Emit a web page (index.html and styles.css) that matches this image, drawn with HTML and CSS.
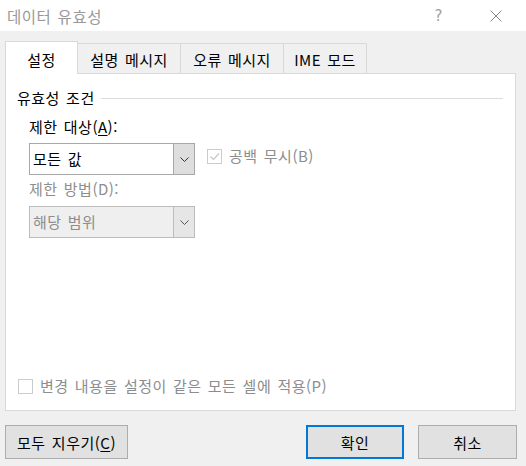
FILE: index.html
```html
<!DOCTYPE html>
<html lang="ko">
<head>
  <meta charset="UTF-8">
  <title>데이터 유효성</title>
  <link rel="stylesheet" href="styles.css">
</head>

<body>

<div class="titlebar">
  <div class="title">데이터 유효성</div>
  <div class="help">?</div>
  <svg class="close" width="12" height="12" viewBox="0 0 12 12">
    <path d="M0.5 0.5 L11.5 11.5 M11.5 0.5 L0.5 11.5" stroke="#8a8a8a" stroke-width="1" fill="none"/>
  </svg>
</div>

<div class="dialog">
  <div class="tabs">
    <div class="tab active tab-settings">설정</div>
    <div class="tab tab-input">설명 메시지</div>
    <div class="tab tab-error">오류 메시지</div>
    <div class="tab tab-ime">IME 모드</div>
  </div>

  <div class="panel">
    <div class="group-title">
      <span>유효성 조건</span>
      <div class="group-line"></div>
    </div>

    <div class="field-label">제한 대상(<u>A</u>):</div>
    <div class="combo-row">
      <div class="combo">
        <div class="combo-value">모든 값</div>
        <div class="combo-button">
          <svg width="9" height="5" viewBox="0 0 9 5"><polyline points="0.5,0.5 4.5,4.5 8.5,0.5" stroke="#333" fill="none"/></svg>
        </div>
      </div>
      <label class="check disabled blank-check">
        <span class="box">
          <svg width="13" height="13" viewBox="0 0 13 13"><polyline points="2.5,6.5 5.5,9.5 11,3.5" stroke="#c6c6c6" stroke-width="1.2" fill="none"/></svg>
        </span>
        공백 무시(B)
      </label>
    </div>

    <div class="field-label disabled">제한 방법(D):</div>
    <div class="combo combo-disabled">
      <div class="combo-value">해당 범위</div>
      <div class="combo-button">
        <svg width="9" height="5" viewBox="0 0 9 5"><polyline points="0.5,0.5 4.5,4.5 8.5,0.5" stroke="#555" fill="none"/></svg>
      </div>
    </div>

    <label class="check disabled apply-check">
      <span class="box"></span>
      변경 내용을 설정이 같은 모든 셀에 적용(P)
    </label>
  </div>

  <div class="button-row">
    <button class="btn btn-clear">모두 지우기(<u>C</u>)</button>
    <button class="btn btn-ok">확인</button>
    <button class="btn btn-cancel">취소</button>
  </div>
</div>

</body>
</html>
```

FILE: styles.css
```css
* { margin: 0; padding: 0; box-sizing: border-box; }
body {
  font-family: "Noto Sans CJK KR", "Malgun Gothic", sans-serif;
  font-size: 15px;
  letter-spacing: 0.5px;
  word-spacing: 1.5px;
  color: #000;
  background: #f0f0f0;
  width: 526px;
  height: 466px;
  overflow: hidden;
}
u { text-decoration: underline; text-underline-offset: 2px; }

/* title bar */
.titlebar {
  height: 31px;
  background: #fff;
  display: flex;
  align-items: center;
  padding-left: 7px;
}
.title {
  flex: 1;
  font-size: 15.5px;
  color: #999;
  line-height: 18px;
}
.help {
  color: #a0a0a0;
  font-family: "DejaVu Sans", sans-serif;
  font-size: 15px;
  margin-right: 47px;
  line-height: 18px;
}
.close { margin-right: 24px; }

.dialog { padding: 10px 9px 0 5px; }

/* tabs */
.tabs {
  display: flex;
  align-items: flex-end;
  height: 32px;
}
.tab {
  height: 30px;
  line-height: 18px;
  padding-top: 7px;
  text-align: center;
  border: 1px solid #d9d9d9;
  border-bottom: none;
  border-left: none;
  background: #f0f0f0;
}
.tab.active {
  height: 33px;
  padding-top: 9px;
  margin-bottom: -1px;
  border-left: 1px solid #d9d9d9;
  background: #fff;
  position: relative;
  z-index: 1;
}
.tab-settings { width: 73px; }
.tab-input { width: 103px; }
.tab-error { width: 103px; }
.tab-ime { width: 83px; }

/* panel */
.panel {
  height: 338px;
  margin-right: 1px;
  background: #fff;
  border: 1px solid #d9d9d9;
  padding: 15px 12px 15px 11px;
  display: flex;
  flex-direction: column;
}
.group-title {
  display: flex;
  align-items: center;
  line-height: 18px;
}
.group-line {
  flex: 1;
  height: 1px;
  background: #dcdcdc;
  margin-left: 6px;
}
.field-label {
  line-height: 18px;
  margin: 11px 0 7px 12px;
}
.field-label.disabled {
  color: #8d8d8d;
  margin-top: 5px;
  margin-bottom: 8px;
}

.combo-row { display: flex; }
.combo {
  width: 166px;
  height: 32px;
  margin-left: 12px;
  display: flex;
  border: 1px solid #a8a8a8;
  background: #fff;
}
.combo-value {
  flex: 1;
  line-height: 30px;
  padding-left: 3px;
}
.combo-button {
  width: 21px;
  background: #dedede;
  border-left: 1px solid #a8a8a8;
  display: flex;
  align-items: center;
  justify-content: center;
}
.combo-disabled {
  background: #efefef;
  border-color: #bcbcbc;
  color: #8d8d8d;
}
.combo-disabled .combo-button {
  background: #e6e6e6;
  border-left-color: #bcbcbc;
}

/* checkboxes */
.check {
  display: flex;
  align-items: center;
  line-height: 18px;
}
.check.disabled { color: #8d8d8d; }
.box {
  width: 15px;
  height: 15px;
  border: 1px solid #cccccc;
  background: #fff;
  margin-right: 7px;
  display: flex;
  align-items: center;
  justify-content: center;
}
.blank-check {
  align-self: flex-start;
  margin: 4px 0 0 12px;
}
.apply-check {
  margin-top: auto;
  margin-left: 1px;
}

/* buttons */
.button-row {
  display: flex;
  margin-top: 14px;
}
.btn {
  height: 34px;
  font-family: inherit;
  font-size: 15px;
  letter-spacing: 0.5px;
  word-spacing: 1.5px;
  background: #e1e1e1;
  border: 1px solid #adadad;
  color: #000;
}
.btn-clear { width: 123px; }
.btn-ok {
  width: 98px;
  margin-left: auto;
  border: 2px solid #0078d7;
}
.btn-cancel {
  width: 99px;
  margin-left: 14px;
}
```
